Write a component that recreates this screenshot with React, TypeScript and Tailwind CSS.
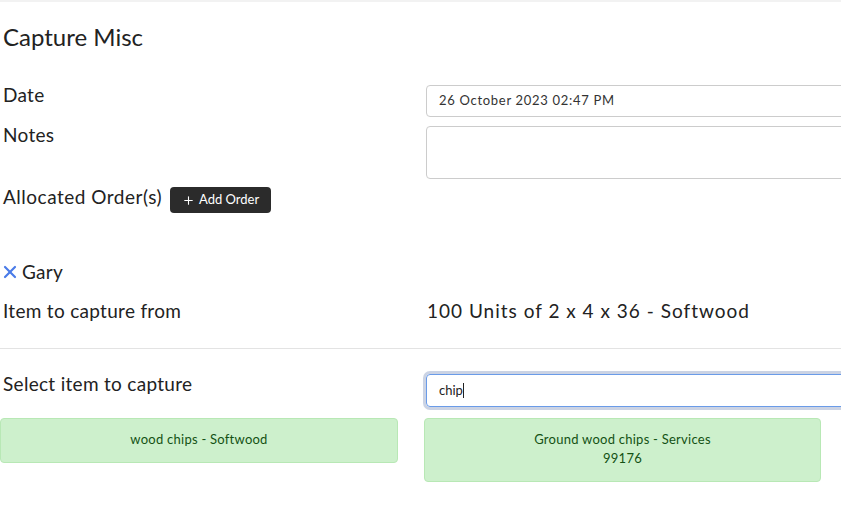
import { Plus, X } from "lucide-react";

export default function App() {
  const results = [
    { name: "wood chips - Softwood", code: "" },
    { name: "Ground wood chips - Services", code: "99176" },
  ];

  return (
    <div
      className="w-[841px] h-[520px] overflow-hidden bg-white text-[#222]"
      style={{ fontFamily: "Lato, 'Noto Sans', sans-serif" }}
    >
      <div className="h-[2px] bg-[#f2f2f2]" />

      <div className="pl-[3px]">
        <h1 className="mt-[20px] text-[24px] leading-[30px] text-[#222]">Capture Misc</h1>

        {/* Form rows */}
        <div className="mt-[33px] grid grid-cols-[423px_1fr] gap-y-[9px]">
          <div className="text-[19px] leading-[20px] tracking-[0.3px]">Date</div>
          <div className="w-[440px] h-[32px] border border-[#ccc] rounded-[4px] flex items-center pl-[12px] text-[13px] tracking-[0.7px] text-[#333]">
            26 October 2023 02:47 PM
          </div>

          <div className="text-[19px] leading-[18px] tracking-[0.3px]">Notes</div>
          <div className="w-[440px] h-[53px] border border-[#ccc] rounded-[4px]" />
        </div>

        <div className="mt-[2px] flex items-center gap-[8px]">
          <span className="text-[19px] leading-[22px] tracking-[0.5px]">Allocated Order(s)</span>
          <button className="mt-[6px] h-[26px] px-[12px] rounded-[4px] bg-[#2b2b2b] text-white text-[13px] flex items-center gap-[4px]">
            <Plus className="w-[13px] h-[13px]" strokeWidth={2} />
            Add Order
          </button>
        </div>

        <div className="mt-[48px] flex items-center gap-[2px] text-[19px] leading-[22px] tracking-[0.3px]">
          <X className="w-[20px] h-[20px] -ml-[3px] text-[#4a7be8]" strokeWidth={2.6} />
          <span>Gary</span>
        </div>

        <div className="mt-[16px] grid grid-cols-[424px_1fr] text-[19px] leading-[24px]">
          <div className="tracking-[0.3px]">Item to capture from</div>
          <div className="tracking-[1px]">100 Units of 2 x 4 x 36 - Softwood</div>
        </div>
      </div>

      <hr className="mt-[25px] border-t border-[#e3e3e3]" />

      <div className="pl-[3px] mt-[25px] grid grid-cols-[423px_1fr]">
        <div className="text-[19px] leading-[20px] tracking-[0.3px]">Select item to capture</div>
        <div className="w-[440px] h-[33px] border border-[#6a9be8] rounded-[4px] flex items-center pl-[12px] text-[13px] text-[#222] shadow-[0_0_0_3px_rgba(160,175,205,0.55)]">
          chip<span className="inline-block w-[1px] h-[15px] bg-[#222]" />
        </div>
      </div>

      <div className="mt-[11px] grid grid-cols-[398px_397px] gap-[26px] items-start">
        {results.map((r) => (
          <div
            key={r.name}
            className="rounded-[4px] border border-[#b8e8b5] bg-[#cdf0cc] text-[#145214] text-[13px] leading-[19px] tracking-[0.25px] text-center pt-[11px] pb-[13px]"
          >
            <div>{r.name}</div>
            {r.code && <div>{r.code}</div>}
          </div>
        ))}
      </div>
    </div>
  );
}
